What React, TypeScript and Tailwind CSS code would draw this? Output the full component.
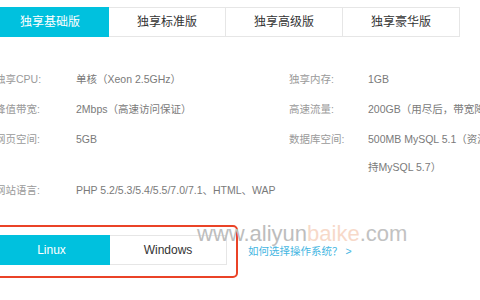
const tabs = ['独享基础版', '独享标准版', '独享高级版', '独享豪华版'];

function Row({ label, value, labelW }: { label: string; value: React.ReactNode; labelW: string }) {
  return (
    <div className="flex">
      <span className={`${labelW} shrink-0 text-[#9a9a9a]`}>{label}</span>
      <span className="text-[#7a7a7a] whitespace-nowrap">{value}</span>
    </div>
  );
}

export default function App() {
  return (
    <div className="relative w-[480px] h-[300px] overflow-hidden bg-white font-['Liberation_Sans','Noto_Sans_CJK_SC',sans-serif]">
      <div className="ml-[-8px]">
        {/* plan tabs */}
        <div className="flex mt-[7px]">
          {tabs.map((t, i) => (
            <div
              key={t}
              className={`w-[117px] h-[30px] shrink-0 flex items-center justify-center text-[12px] border-y border-r ${
                i === 0 ? 'bg-[#00c1de] border-[#00c1de] text-white' : 'border-[#e6e6e6] text-[#333]'
              }`}
            >
              {t}
            </div>
          ))}
        </div>

        {/* specs */}
        <div className="ml-[3px] mt-[27px] text-[10.5px] leading-[30px] grid grid-cols-[294px_1fr]">
          <div className="flex flex-col">
            <Row labelW="w-[81px]" label="独享CPU:" value="单核（Xeon 2.5GHz）" />
            <Row labelW="w-[81px]" label="峰值带宽:" value="2Mbps（高速访问保证）" />
            <Row labelW="w-[81px]" label="网页空间:" value="5GB" />
          </div>
          <div className="flex flex-col">
            <Row labelW="w-[79px]" label="独享内存:" value="1GB" />
            <Row labelW="w-[79px]" label="高速流量:" value="200GB（用尽后，带宽降至1Mbps）" />
            <div className="flex">
              <span className="w-[79px] shrink-0 text-[#9a9a9a]">数据库空间:</span>
              <span className="text-[#7a7a7a] leading-[28px] pt-px whitespace-nowrap">
                500MB MySQL 5.1（资源充足时支
                <br />
                持MySQL 5.7）
              </span>
            </div>
          </div>
          <div className="col-span-2 mt-[-6px]">
            <Row labelW="w-[81px]" label="网站语言:" value="PHP 5.2/5.3/5.4/5.5/7.0/7.1、HTML、WAP" />
          </div>
        </div>

        {/* os choice */}
        <div className="flex items-center mt-[30px] ml-[1px]">
          <div className="w-[117px] h-[30px] flex items-center justify-center bg-[#00c1de] text-white text-[12px]">
            Linux
          </div>
          <div className="w-[117px] h-[30px] flex items-center justify-center border-y border-r border-[#e6e6e6] text-[#333] text-[12px]">
            Windows
          </div>
          <a className="ml-[21px] mt-[4px] text-[10.5px] text-[#45b6e2]">如何选择操作系统？ &gt;</a>
        </div>
      </div>

      {/* annotation box */}
      <div className="absolute left-[-10px] top-[225px] w-[248px] h-[53px] border-2 border-[#ea4327] rounded-[5px]" />

      {/* watermark */}
      <div className="absolute left-[197px] top-[223px] text-[22px] leading-none font-['Liberation_Sans',sans-serif] pointer-events-none">
        <span className="text-[#bdbdbd]">www.aliyun</span>
        <span className="text-[#f7d9c9]">baike</span>
        <span className="text-[#c2c2c2]">.com</span>
      </div>
    </div>
  );
}
